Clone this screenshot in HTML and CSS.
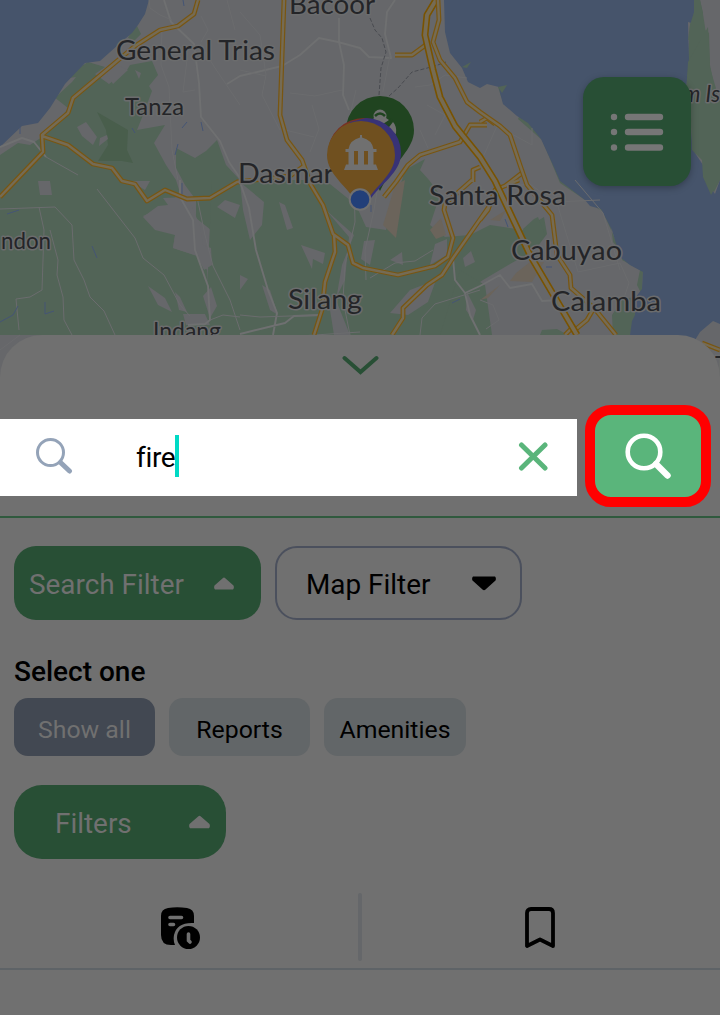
FILE: index.html
```html
<!DOCTYPE html>
<html lang="en">
<head>
<meta charset="utf-8">
<title>Search map</title>
<link rel="stylesheet" href="styles.css">
</head>
<body>
<main class="screen">
  <section class="map">
    <svg class="map-canvas" viewBox="0 0 720 380" width="720" height="380">
      <rect class="land" width="720" height="380"/>
      <g class="green">
        <path d="M0 155L18 143 30 145 42 137 62 117 68 108 54 97 75 70 88 62 105 67 95 74 109 84 127 70 130 65 152 61 158 75 149 86 152 91 143 115 137 130 165 125 154 143 166 165 176 180 180 193 168 205 143 216 175 235 173 248 198 256 207 270 210 335H0Z"/>
        <path d="M176 148L195 158 206 151 217 140 226 165 240 180V335H205L215 305 208 265 211 230 196 218 196 200 185 185 176 168Z"/>
        <path d="M212 180L325 180 356 205 366 227 386 230 391 211 402 180 405 170 425 159 420 170 429 180 440 195 430 225 445 237 470 235 490 225 523 230 544 217 547 234 535 250 510 264 483 280 467 291 460 335H205Z"/>
        <path d="M460 270L485 285 492 335H440ZM612 315L622 300 637 296 638 310 630 335H613ZM542 330L557 329 568 335H540ZM640 270L622 260 622 253 636 266 643 270 642 295 637 285ZM132 30L137 26 141 34 134 41 128 38Z"/>
        <path d="M690 25L694 14 694 0H700L703 13 698 25 709 33 710 65 715 90 720 100V180L714 192 703 177 703 155 693 153 691 120 686 96 688 60ZM520 115L540 122 549 143 551 157 565 181 600 205 611 226 613 242 624 255 619 248 603 212 560 183 542 140 518 119ZM498 87L507 85 502 93 504 105Z"/>
        <path d="M523 229L534 219 538 217 545 235 537 246 528 243Z"/>
      </g>
      <path class="forest" d="M97 112L128 130 127 150 133 163 122 161 98 161 108 145 106 130Z"/>
      <g class="town">
        <path d="M107 74L119 66 128 70 113 84ZM77 127L86 122 97 137 93 145 82 136ZM100 138L107 135 108 139 99 146ZM135 70L141 73 139 79ZM53 80L76 77 72 82 58 95ZM38 181H50L52 195H40ZM130 181H150L145 190ZM143 217L158 206 168 205 163 198 188 197 200 226 203 245 211 248 212 265 204 270 197 256 173 248 175 235 155 230ZM148 286L165 298 172 312 158 305ZM175 292L180 297 187 312 179 310ZM183 314H205L210 325 186 325ZM217 207L225 200 240 205 235 218ZM203 296L211 287 217 306 210 318Z"/>
        <path d="M240 182L264 202 262 225 250 240 243 210ZM279 202L285 205 293 228 287 230ZM301 245L325 253 323 264 313 259 312 269ZM240 275L248 279 240 290ZM262 285L270 290 278 315 270 310ZM326 210L349 237 345 280 330 310 334 335 350 335 336 300 342 265 354 235ZM364 241L375 240 370 265 361 259ZM390 260L402 252 403 265ZM435 244L447 239V255L430 265ZM463 258L471 251 475 262 465 267ZM390 313L410 290 436 280 428 302 408 315ZM467 292L476 310 473 320 466 310Z"/>
      </g>
      <path class="sand" d="M395 185L405 180 396 238 383 225ZM430 230L441 218 446 235 436 239ZM516 273L530 262 544 262 532 282 510 281ZM480 300L500 285 488 298ZM490 220L506 210 500 221Z"/>
      <g class="water">
        <path d="M0 0H149L145 14 138 25 132 33 118 45 100 61 85 63 65 84 50 108 38 123 22 126 0 147Z"/>
        <path d="M444 0H694V12L698 25 688 22 689 60 686 90 690 120 693 150 703 165 704 178 715 194 720 180V324L713 321 700 332 692 345 630 335 632 321 635 315 635 298 642 289 643 272 630 265 620 257 612 230 601 209 590 206 585 200 560 181 553 165 541 139 528 123 517 116 503 104 500 93 499 87 487 84 480 88 468 82 462 68 450 53 445 32Z"/>
      </g>
      <g class="green"><path d="M688 62L708 27 710 68 720 102V179L711 195 703 177 702 160 692 150 691 118 686 95ZM690 25L694 12V0H700L703 14 707 40H688ZM462 67L471 62 467 68ZM498 87L507 85 502 93Z"/></g>
      <g class="minor">
        <path d="M164 0L171 22 194 44 199 83 201 117 220 141 229 162 240 178M0 147L22 138 34 142 46 157M227 84L240 76 282 66 300 55 319 38 338 42 360 48 369 57 391 58 385 34 387 12 395 0M339 18V42L344 65 343 95 349 110M180 180L180 197 193 220 195 250 208 286 210 320 205 324 188 325M240 182L249 208 256 250 268 290 277 313 273 335M240 334L285 323 294 316 322 315M453 258L455 280 465 293 470 315 480 335M465 293L480 286 500 275 510 288 532 284 542 301 560 300"/>
      </g>
      <g class="thin">
        <path d="M46 157L78 175M162 27L161 65 169 87 172 150 178 180M149 0L150 8 160 15 172 20M200 44L215 68 240 105M227 0L235 30M201 16L208 30 201 42M187 60L183 92 195 90M240 12L260 35 266 75 262 95 280 130M290 93L315 96 342 90M310 152L319 129 312 105M390 55L383 92M415 87L430 85 445 75 467 78M427 105L445 115 435 135M484 155L497 126 480 114M497 126L532 145 532 128M0 209L55 207M97 189L135 238 143 258 164 275 180 305 190 316M39 207L44 230 42 290 30 297 16 299 19 330M55 207L72 225 74 260 84 280 90 297 104 311 115 335M50 230L58 260 57 275 63 297 64 320 72 335M197 197L205 235 213 266 230 300 240 330M210 320L223 315 240 317M240 315L260 317 320 315M300 336L360 332M420 335L422 318 435 304 448 300 480 290M480 300L493 305 499 320 486 329M556 200L578 272 620 263 629 283 624 298M575 180L603 213 620 270M354 180L355 222 345 265 343 300 350 335M378 185L374 210 365 250 366 280M240 70L266 76M356 90L350 115M370 278L395 263 415 261 433 250M314 137L285 130M420 130L428 148M496 188L530 184 554 202 600 200M0 350L20 335"/>
      </g>
      <path class="border-line" d="M370 18L375 30 382 38 386 52 381 68 379 95M389 96L398 88 412 72 435 66 446 62"/>
      <path class="stream" d="M183 0L184 6M20 127V134M132 128L135 133M201 122L203 131M187 122L182 128M178 144L175 155M182 183V194M7 214L19 210M92 246L97 258M0 322L13 315 18 306M45 302V314L54 311M371 205V212M452 303L460 299M505 219L508 227M546 267H552"/>
      <g class="road-edge">
        <path id="roads" d="M198 0L194 14 178 26 160 30 135 46 73 98 68 113 42 135 43 152 0 197M42 136L68 145 93 164 112 168 122 181 135 184 147 201 165 190 187 199 210 198 237 182 290 176 304 166M284 0L280 115 287 140 302 160 311 185 323 205 333 234 348 245 353 263 363 268 398 275 435 266 448 257 453 238 444 210 445 204 472 180M334 234L335 252 325 282 322 310 314 335M395 55H412L427 44M384 197L396 182 408 165 420 155 460 142 470 125H487M480 220L488 210 495 190 519 180M490 205L453 258 442 275 427 285 403 308V318L392 335M575 330L587 320 594 308M702 343L720 350M473 182V170L480 167M565 335L575 325M480 122L487 118 495 124M505 186L522 173"/>
      </g>
      <use class="road-fill" href="#roads"/>
      <path class="highway-edge" d="M436 0L427 15 425 35 433 70 440 97 455 126 480 157 495 181 530 255 577 335"/>
      <path class="highway-fill" d="M436 0L427 15 425 35 433 70 440 97 455 126 480 157 495 181 530 255 577 335"/>
      <path class="road-edge" d="M438 0L439 20 433 42 440 60 455 78 467 102 480 112 500 126 510 135 520 165 527 185 552 215 557 255 570 275 571 288 594 308 616 335"/>
      <path class="road-fill" d="M438 0L439 20 433 42 440 60 455 78 467 102 480 112 500 126 510 135 520 165 527 185 552 215 557 255 570 275 571 288 594 308 616 335"/>
      <g class="place">
        <text x="289" y="14" textLength="86" lengthAdjust="spacingAndGlyphs">Bacoor</text>
        <text x="116" y="60" textLength="159" lengthAdjust="spacingAndGlyphs">General Trias</text>
        <text class="small" x="125" y="115" textLength="59" lengthAdjust="spacingAndGlyphs">Tanza</text>
        <text x="238" y="183" textLength="96" lengthAdjust="spacingAndGlyphs">Dasmar</text>
        <text x="429" y="205" textLength="137" lengthAdjust="spacingAndGlyphs">Santa Rosa</text>
        <text class="small" x="1" y="249" textLength="50" lengthAdjust="spacingAndGlyphs">ndon</text>
        <text x="511" y="260" textLength="111" lengthAdjust="spacingAndGlyphs">Cabuyao</text>
        <text x="551" y="311" textLength="110" lengthAdjust="spacingAndGlyphs">Calamba</text>
        <text x="288" y="309" textLength="74" lengthAdjust="spacingAndGlyphs">Silang</text>
        <text class="small" x="153" y="339" textLength="68" lengthAdjust="spacingAndGlyphs">Indang</text>
        <text class="small island" x="683" y="102" textLength="37" lengthAdjust="spacingAndGlyphs">m Is</text>
        <text class="small" x="715" y="373">T</text>
      </g>
      <path class="pin-green" d="M380 96A34 34 0 0 1 414 130C414 150 395 160 380 191 365 160 346 150 346 130A34 34 0 0 1 380 96Z"/>
      <g class="pin-glyph">
        <circle cx="380" cy="116" r="6.5"/><path d="M370 121L380 114 389 120 380 126ZM386 131L393 122Q397 126 396 134Z"/>
      </g>
      <path class="pin-cut" d="M375 116Q380 111 385 116M384 128L392 119"/>
      <path class="pin-red" d="M364 118A35 35 0 0 1 399 153C399 173 378 180 362 205 345 185 328 172 328 153A36 35 0 0 1 364 118Z"/>
      <path class="pin-violet" d="M366 118A35 35 0 0 1 401 153C401 173 380 184 369 201L350 180V122Z"/>
      <path class="pin-orange" d="M361 121A34 34 0 0 1 395 155C395 176 373 186 361 210 349 186 327 176 327 155A34 34 0 0 1 361 121Z"/>
      <path class="pin-glyph" d="M360 135H362V137.500Q372 140 373.500 149H376.500V152H373.500V164.500H376L378 170H344L346 164.500H348.500V152H345.500V149H348.500Q350 140 360 137.500ZM354 151V164.500H358V151ZM364 151V164.500H368V151Z" fill-rule="evenodd"/>
      <circle class="here" cx="360" cy="199.500" r="10.3"/>
    </svg>
    <button class="list-button" aria-label="List">
      <svg width="54" height="40" viewBox="0 0 54 40"><path d="M18 6H50M18 21H50M18 36.500H50"/><g><circle cx="4" cy="6" r="3.200"/><circle cx="4" cy="21" r="3.200"/><circle cx="4" cy="36.500" r="3.200"/></g></svg>
    </button>
  </section>

  <section class="sheet">
    <div class="handle">
      <svg width="38" height="22" viewBox="0 0 38 22"><path d="M3.500 3L19.500 17 35.500 3"/></svg>
    </div>
    <div class="search-row">
      <div class="search-field">
        <svg class="lens" width="38" height="38" viewBox="0 0 38 38"><circle cx="15.500" cy="15.500" r="13"/><path class="lens-handle" d="M25.500 25.500L34.500 34"/></svg>
        <span class="query">fire</span><span class="caret"></span>
        <svg class="clear" width="32" height="30" viewBox="0 0 32 30"><path d="M4.500 3L28 26M28 3L4.500 26"/></svg>
      </div>
      <button class="search-button" aria-label="Search">
        <svg width="48" height="48" viewBox="0 0 48 48"><circle cx="20" cy="20" r="16.300"/><path class="lens-handle" d="M32 32L43.500 43.500"/></svg>
      </button>
    </div>
    <div class="filter-row">
      <button class="pill solid">Search Filter<svg class="caret-up" width="20" height="13" viewBox="0 0 20 13"><path d="M8.700 1.200Q10 0 11.300 1.200L19.500 8.500Q20.500 11 19 12.500H1Q-.5 11 .5 8.500Z"/></svg></button>
      <button class="pill outline">Map Filter<svg class="caret-down" width="24" height="15" viewBox="0 0 24 15"><path d="M1 .5H23Q24.500 2 23.500 4.500L13.500 13.500Q12 15 10.500 13.500L.5 4.500Q-.5 2 1 .5Z"/></svg></button>
    </div>
    <h2 class="heading">Select one</h2>
    <div class="chips">
      <button class="chip active">Show all</button>
      <button class="chip">Reports</button>
      <button class="chip">Amenities</button>
    </div>
    <button class="pill solid filters">Filters<svg class="caret-up" width="21" height="14" viewBox="0 0 20 13"><path d="M8.700 1.200Q10 0 11.300 1.200L19.500 8.500Q20.500 11 19 12.500H1Q-.5 11 .5 8.500Z"/></svg></button>
    <div class="tabs">
      <div class="tab">
        <svg width="40" height="43" viewBox="0 0 40 43"><path d="M8 1Q17-.5 27 1Q34 2 34 9V16Q17 15 14 28Q13 34 15 38H11Q1 38 1 28V9Q1 2 8 1Z"/><circle cx="28.500" cy="30.500" r="11.500"/><path class="knock" d="M10 10.500H21.500M10 17.500H13.500"/><path class="knock" d="M28.500 27V33.500L30 35"/></svg>
      </div>
      <div class="divider"></div>
      <div class="tab">
        <svg class="bookmark" width="32" height="43" viewBox="0 0 32 43"><path d="M3 40V7Q3 3 7 3H25Q29 3 29 7V40L16 33.500Z"/></svg>
      </div>
    </div>
  </section>
</main>
</body>
</html>
```
FILE: styles.css
```css
* { box-sizing: border-box; }
body { margin: 0; background: #707070; font-family: Roboto, sans-serif; }
svg { display: block; flex: none; }
button { margin: 0; padding: 0; border: 0; font: inherit; }
.screen { width: 720px; height: 1015px; overflow: hidden; background: #707070; }

/* Map */
.map { position: relative; height: 380px; }
.land, .town { fill: #66676a; }
.green { fill: #526457; }
.forest { fill: #495e4c; }
.sand { fill: #6b645b; }
.water { fill: #46546b; }
.minor, .thin, .border-line, .stream, .road-edge, .road-fill, .highway-edge, .highway-fill { fill: none; stroke-linejoin: round; }
.minor { stroke: #6f7071; stroke-width: 1.9; }
.thin { stroke: #6b6c6e; stroke-width: 1; }
.border-line { stroke: #494b50; stroke-width: 1; stroke-dasharray: 4 2; }
.stream { stroke: #455575; stroke-width: 1; }
.road-edge { stroke: #795611; stroke-width: 4.8; }
.road-fill { stroke: #756b54; stroke-width: 2.4; }
.highway-edge { stroke: #795300; stroke-width: 7; }
.highway-fill { stroke: #756b54; stroke-width: 3.8; }
.place { font: 26px Lato, sans-serif; fill: #242528; stroke: #6b6c6d; stroke-width: 3px; paint-order: stroke; stroke-linejoin: round; }
.place .small { font-size: 22.5px; }
.place .island { font-style: italic; }
.pin-green { fill: #204420; }
.pin-red { fill: #783023; }
.pin-violet { fill: #383276; }
.pin-orange { fill: #70501f; }
.pin-glyph { fill: #707070; }
.pin-cut { fill: none; stroke: #204420; stroke-width: 2.5; }
.here { fill: #223f79; stroke: #707070; stroke-width: 2; }
.list-button {
  position: absolute; left: 583px; top: 77px; width: 108px; height: 109px;
  padding: 32px 27px 34px; border-radius: 21px; background: #284f35;
  box-shadow: 0 2px 7px #0004;
}
.list-button path { stroke: #767676; stroke-width: 6.4; stroke-linecap: round; }
.list-button g { fill: #767676; }

/* Bottom sheet */
.sheet { position: relative; height: 680px; margin-top: -45px; border-radius: 42px 42px 0 0; background: #707070; }
.handle { height: 70px; padding-top: 20px; display: flex; justify-content: center; }
.handle path { fill: none; stroke: #284f35; stroke-width: 4; stroke-linecap: round; }
.search-row { height: 113px; display: flex; gap: 8px; border-bottom: 2px solid #305a3e; }
.search-field { width: 577px; height: 77px; margin-top: 14px; padding: 0 28px 0 35px; display: flex; align-items: center; background: #fff; }
.lens { margin-top: -3px; fill: none; stroke: #94a3b8; stroke-width: 3; }
.lens-handle { stroke-width: 5; stroke-linecap: round; }
.query { margin-left: 63px; width: 39px; font-size: 28px; letter-spacing: -.3px; color: #000; white-space: nowrap; }
.caret { width: 4px; height: 42px; margin-top: -3px; background: #00dac5; }
.clear { margin-left: auto; margin-top: -2px; fill: none; stroke: #5ab57b; stroke-width: 5; stroke-linecap: round; }
.search-button { width: 126px; height: 102px; border: 10px solid #f00; border-radius: 26px; display: grid; place-items: center; background: #5ab57b; }
.search-button svg { fill: none; stroke: #fff; stroke-width: 4.6; }
.search-button .lens-handle { stroke-width: 6.4; }

.filter-row { display: flex; gap: 14px; padding: 28px 14px 0; }
.pill { width: 247px; height: 74px; border-radius: 22px; font-size: 27.9px; display: flex; align-items: center; justify-content: space-between; padding: 3px 27px 0 15px; white-space: nowrap; }
.pill svg { margin-top: -3px; }
.solid { background: #284f35; color: #707070; }
.outline { background: transparent; border: 2px solid #4b505d; color: #000; padding: 3px 24px 0 29px; }
.caret-up { fill: #707070; }
.caret-down { fill: #000; }
.heading { margin: 0; padding: 36px 14px 10px; font-size: 28px; font-weight: 500; line-height: 32px; color: #000; }
.chips { display: flex; gap: 14px; padding-left: 14px; }
.chip { width: 141px; height: 58px; padding-top: 5px; border-radius: 14px; background: #626668; color: #000; font-size: 24.8px; }
.chip:last-child { width: 142px; }
.active { background: #424852; color: #707070; }
.filters { width: 212px; margin: 29px 14px 0; padding: 3px 16px 0 41px; border-radius: 28px; }

.tabs { height: 111px; padding-top: 34px; display: grid; grid-template-columns: 1fr 4px 1fr; border-bottom: 2px solid #5e6367; }
.tab { display: flex; justify-content: center; padding-top: 13px; }
.tab:first-child { padding: 14px 0 0 2px; }
.tab:last-child { padding-right: 2px; }
.knock { fill: none; stroke: #707070; stroke-width: 3.6; stroke-linecap: round; }
.tab circle { stroke: #707070; stroke-width: 3; paint-order: stroke; r: 11.5px; }
.divider { height: 68px; border-radius: 2px; background: #65676a; }
.bookmark { fill: none; stroke: #000; stroke-width: 3.8; stroke-linejoin: round; }
```
